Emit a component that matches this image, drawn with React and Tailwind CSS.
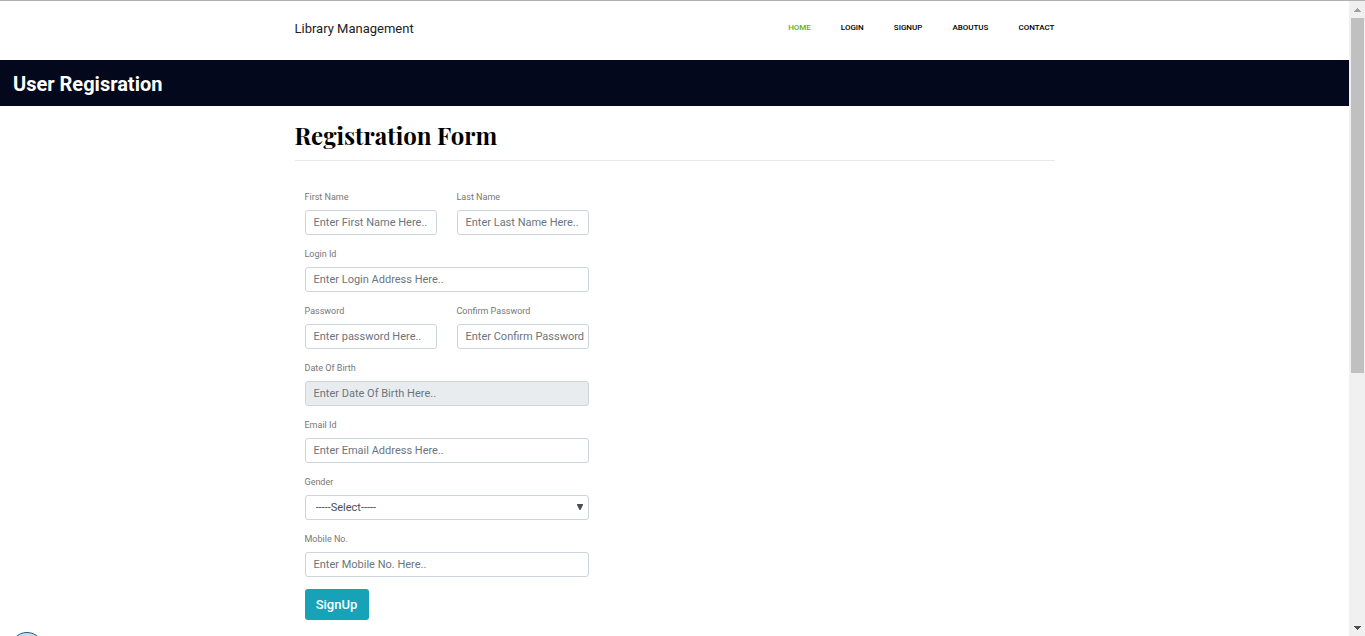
const navLinks = ["HOME", "LOGIN", "SIGNUP", "ABOUTUS", "CONTACT"];

const control =
  "block h-[25px] w-full rounded-[3px] border border-[#ced4da] pl-2 pr-1 text-[11px] leading-4 text-[#495057] outline-none placeholder:text-[#6c757d] placeholder:opacity-100 focus:border-[#80bdff]";

function Field({ id, label, children }) {
  return (
    <div className="flex min-w-0 flex-col gap-1.5">
      <label htmlFor={id} className="text-[9px] leading-[14px] text-[#777777]">
        {label}
      </label>
      {children}
    </div>
  );
}

function TextField({ id, label, placeholder, type = "text", readOnly = false }) {
  return (
    <Field id={id} label={label}>
      <input
        id={id}
        name={id}
        type={type}
        placeholder={placeholder}
        readOnly={readOnly}
        className={`${control} ${readOnly ? "bg-[#e9ecef]" : "bg-white"}`}
      />
    </Field>
  );
}

function Header() {
  return (
    <header className="h-[60px] border-t border-[#b0b0b0]">
      <div className="mx-auto flex max-w-[760px] items-start justify-between pt-[18px]">
        <a href="#home" className="text-[13px] leading-5 text-[#222222]">
          Library Management
        </a>
        <nav className="flex gap-[30px]">
          {navLinks.map((name, i) => (
            <a
              key={name}
              href={`#${name.toLowerCase()}`}
              className={`text-[8px] font-medium leading-[18px] ${i === 0 ? "text-[#4cb820]" : "text-black"}`}
            >
              {name}
            </a>
          ))}
        </nav>
      </div>
    </header>
  );
}

function RegistrationForm() {
  return (
    <form className="flex max-w-[304px] flex-col gap-3 px-2.5 pt-[29px]">
      <div className="grid grid-cols-2 gap-5">
        <TextField id="firstName" label="First Name" placeholder="Enter First Name Here.." />
        <TextField id="lastName" label="Last Name" placeholder="Enter Last Name Here.." />
      </div>
      <TextField id="login" label="Login Id" placeholder="Enter Login Address Here.." />
      <div className="grid grid-cols-2 gap-5">
        <TextField id="password" type="password" label="Password" placeholder="Enter password Here.." />
        <TextField id="confirmPassword" type="password" label="Confirm Password" placeholder="Enter Confirm Password" />
      </div>
      <TextField id="dob" label="Date Of Birth" placeholder="Enter Date Of Birth Here.." readOnly />
      <TextField id="email" type="email" label="Email Id" placeholder="Enter Email Address Here.." />
      <Field id="gender" label="Gender">
        <div className="relative">
          <select id="gender" name="gender" className={`${control} appearance-none bg-white pl-2.5`}>
            <option>-----Select-----</option>
            <option>Male</option>
            <option>Female</option>
          </select>
          <svg
            className="pointer-events-none absolute right-1.5 top-[9px] h-[6px] w-[6px]"
            viewBox="0 0 6 6"
            aria-hidden="true"
          >
            <path d="M0 0h6v1L3.5 6h-1L0 1z" fill="#495057" />
          </svg>
        </div>
      </Field>
      <TextField id="mobile" type="tel" label="Mobile No." placeholder="Enter Mobile No. Here.." />
      <button
        type="submit"
        className="h-[31px] w-16 rounded-[3px] bg-[#17a2b8] text-[13px] font-medium leading-5 text-white"
      >
        SignUp
      </button>
    </form>
  );
}

function ScrollRail() {
  return (
    <div className="sticky top-0 flex h-screen w-4 shrink-0 flex-col border-t border-[#b0b0b0] bg-[#f0f0f0]" aria-hidden="true">
      <svg className="h-[17px] w-4 shrink-0" viewBox="0 0 16 17">
        <path d="M5 11v-1h1v-1h1v-1h1v-1h1v1h1v1h1v1h1v1z" fill="#a0a0a0" />
      </svg>
      <div className="flex grow flex-col pl-0.5 pr-px">
        <div className="h-[59%] bg-[#c0c0c0]" />
      </div>
      <svg className="h-[17px] w-4 shrink-0" viewBox="0 0 16 17">
        <path d="M5 7h7v1h-1v1h-1v1h-1v1h-1v-1h-1v-1h-1v-1h-1z" fill="#505050" />
      </svg>
    </div>
  );
}

export default function App() {
  return (
    <div className="flex min-h-screen bg-white font-['Roboto','Liberation_Sans',sans-serif]">
      <div className="min-w-0 grow">
        <Header />
        <div className="bg-[#03081c] px-[13px] pb-2 pt-2.5">
          <h1 className="text-xl font-bold leading-7 text-white">User Regisration</h1>
        </div>
        <main className="mx-auto max-w-[760px]">
          <h2 className="border-b border-[#e9e9e9] pb-2.5 pt-3.5 font-['Playfair_Display','Liberation_Serif',serif] text-2xl font-bold leading-[30px] text-black">
            Registration Form
          </h2>
          <RegistrationForm />
        </main>
      </div>
      <ScrollRail />
      <div className="fixed -bottom-[30px] left-2.5 size-[34px] rounded-full border border-[#1c5a8c] bg-[#cfdde8]" />
    </div>
  );
}
